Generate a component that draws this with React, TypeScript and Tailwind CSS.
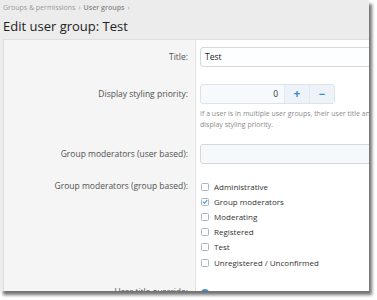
import React from "react";

const groups = [
  { name: "Administrative", checked: false },
  { name: "Group moderators", checked: true },
  { name: "Moderating", checked: false },
  { name: "Registered", checked: false },
  { name: "Test", checked: false },
  { name: "Unregistered / Unconfirmed", checked: false },
];

function Checkbox({ checked }: { checked: boolean }) {
  return (
    <span className="w-[8px] h-[8px] border border-[#a9b4c2] rounded-[1.5px] bg-white flex items-center justify-center shrink-0">
      {checked && (
        <svg width="8" height="8" viewBox="0 0 8 8" className="text-[#3d8fd6]">
          <path d="M1.5 4.2 L3.3 6 L6.6 1.8" fill="none" stroke="currentColor" strokeWidth="1.4" strokeLinecap="round" strokeLinejoin="round" />
        </svg>
      )}
    </span>
  );
}

function Row({ label, labelH, pt, children }: { label: string; labelH: string; pt: string; children: React.ReactNode }) {
  return (
    <div className="flex">
      <div className={`w-[192px] shrink-0 bg-[#f5f5f5] border-r border-[#e4e4e4] pr-[7px] ${pt}`}>
        <div className={`${labelH} flex items-center justify-end text-[8.5px] text-[#505050] whitespace-nowrap`}>{label}</div>
      </div>
      <div className={`flex-1 bg-white pl-[4px] ${pt}`}>{children}</div>
    </div>
  );
}

export default function App() {
  return (
    <div className="w-[377px] h-[300px] bg-white relative overflow-hidden" style={{ fontFamily: '"Open Sans", "Liberation Sans", sans-serif' }}>
      <div className="w-[369px] h-[291px] bg-[#ececec] overflow-hidden shadow-[3px_4px_3px_rgba(0,0,0,0.55)]">
        {/* breadcrumb */}
        <div className="pl-[3px] pt-[3px] h-[14px] flex items-center gap-[3px] text-[7px] text-[#9a9a9a]">
          <span>Groups &amp; permissions</span>
          <span>›</span>
          <span className="font-semibold text-[#888]">User groups</span>
          <span>›</span>
        </div>
        <h1 className="pl-[3px] mt-[2px] h-[20px] leading-[20px] text-[13px] text-[#222]">Edit user group: Test</h1>

        {/* form block */}
        <div className="ml-[3px] mt-[3px] border-t border-l border-[#dedede]">
          <Row label="Title:" labelH="h-[20px]" pt="pt-[7px]">
            <div className="h-[20px] w-[200px] border border-[#d8d8d8] rounded-[3px] bg-[#fdfeff] flex items-center pl-[4px] text-[8.5px] text-[#222]">Test</div>
          </Row>

          <Row label="Display styling priority:" labelH="h-[20px]" pt="pt-[17px]">
            <div className="h-[20px] w-[135px] border border-[#dce3eb] rounded-[3px] bg-[#f7fafd] flex">
              <div className="flex-1 flex items-center justify-end pr-[6px] text-[8.5px] text-[#333]">0</div>
              <div className="w-[25px] bg-[#edf3f9] border-l border-[#e3e9f0] flex items-center justify-center text-[#3c8ad0] font-bold text-[12px]">+</div>
              <div className="w-[25px] bg-[#edf3f9] border-l border-[#e3e9f0] flex items-center justify-center text-[#3c8ad0] font-bold text-[11px]">−</div>
            </div>
            <p className="mt-[4px] text-[7px] leading-[11px] text-[#8c8c8c] whitespace-nowrap">If a user is in multiple user groups, their user title and</p>
            <p className="text-[7px] leading-[11px] text-[#8c8c8c]">display styling priority.</p>
          </Row>

          <Row label="Group moderators (user based):" labelH="h-[20px]" pt="pt-[14px]">
            <div className="h-[20px] w-[200px] border border-[#d8d8d8] rounded-[3px] bg-[#f6f9fc]" />
          </Row>

          <Row label="Group moderators (group based):" labelH="h-[15px]" pt="pt-[15px]">
            <ul className="pl-[1px]">
              {groups.map((g) => (
                <li key={g.name} className="h-[15.2px] flex items-center gap-[5px] text-[8px] text-[#333]">
                  <Checkbox checked={g.checked} />
                  <span>{g.name}</span>
                </li>
              ))}
            </ul>
          </Row>

          <Row label="User title override:" labelH="h-[15px]" pt="pt-[15px]">
            <div className="h-[15px] flex items-center gap-[5px] pl-[1px] text-[8px] text-[#333]">
              <span className="w-[8px] h-[8px] rounded-full bg-[#3d8fd6] shrink-0" />
              <span>Use the default user title ladder</span>
            </div>
          </Row>
        </div>
      </div>
    </div>
  );
}
